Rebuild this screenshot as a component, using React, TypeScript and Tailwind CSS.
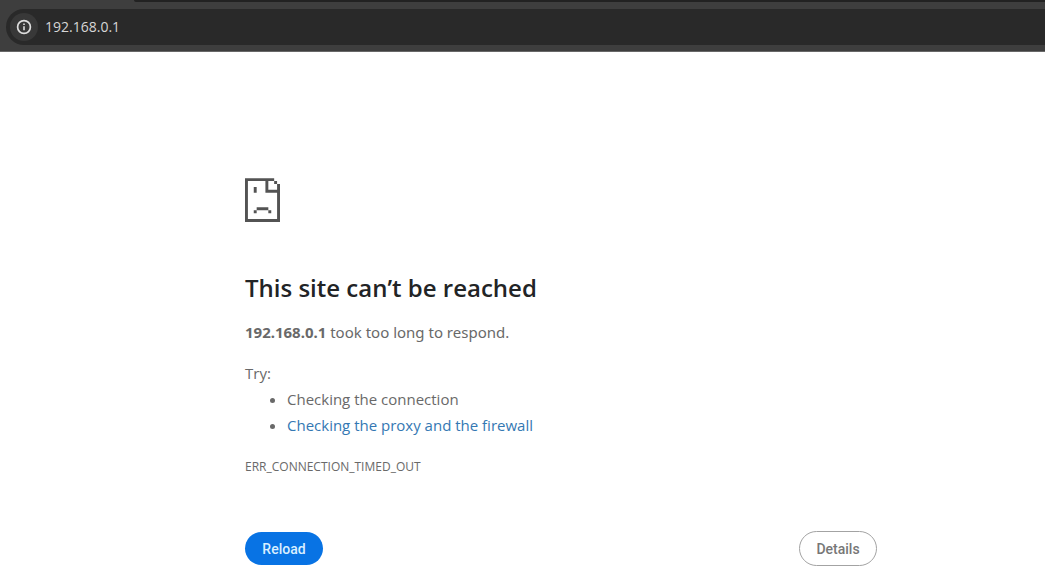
import type { ReactNode } from "react";

const suggestions = [
  { text: "Checking the connection" },
  { text: "Checking the proxy and the firewall", href: "#buttons" },
];

function InfoIcon() {
  return (
    <svg viewBox="0 0 16 16" className="size-4" fill="none" aria-hidden="true">
      <circle cx="8" cy="8" r="6.4" stroke="#dedede" strokeWidth="1.7" />
      <path d="M8 7.2v4.1M8 4.5v1.6" stroke="#dedede" strokeWidth="1.6" />
    </svg>
  );
}

function SadPageIcon() {
  return (
    <svg
      viewBox="0 0 12 15"
      className="h-[44px] w-[35px]"
      fill="#535353"
      aria-hidden="true"
    >
      {/* page outline with the folded corner */}
      <path
        d="M0 0h10v1h1v1h1v13H0zM1 1v13h10V5H7V1zM8 1v3h3V2h-1V1z"
        fillRule="evenodd"
      />
      {/* face */}
      <path d="M3 3h1v2H3zM4 10h4v1H4zM3 11h1v1H3zM8 11h1v1H8z" />
    </svg>
  );
}

function AddressBar({ url }: { url: string }) {
  return (
    <header className="bg-[#3e3e3e]">
      <div className="ml-[134px] h-[2px] rounded-bl bg-[#222222]" />
      <div className="border-b border-[#686868] pt-[7px] pb-[6px] pl-[6px]">
        <div className="flex h-9 items-center gap-[7px] rounded-l-full bg-[#292929] pl-1">
          <button
            type="button"
            aria-label="View site information"
            className="flex size-[28px] items-center justify-center rounded-full bg-[#383838]"
          >
            <InfoIcon />
          </button>
          <input
            type="text"
            aria-label="Address"
            defaultValue={url}
            className="min-w-0 flex-1 bg-transparent font-['Open_Sans','Noto_Sans',sans-serif] text-sm text-[#d6d6d6] outline-none"
          />
        </div>
      </div>
    </header>
  );
}

function PillButton({ children, primary }: { children: ReactNode; primary?: boolean }) {
  return (
    <button
      type="button"
      className={
        primary
          ? "h-[33px] w-[78px] rounded-full bg-[#0873e4] font-['Roboto',sans-serif] text-sm font-medium text-[#d9efff]"
          : "h-[35px] w-[78px] rounded-full border border-[#a3a3a3] font-['Roboto',sans-serif] text-sm font-medium text-[#777777]"
      }
    >
      {children}
    </button>
  );
}

export default function App() {
  return (
    <div className="min-h-screen bg-white font-['Open_Sans','Noto_Sans',sans-serif] text-[#696969]">
      <AddressBar url="192.168.0.1" />
      <main className="pt-[126px] pl-[77px]">
        <div className="mx-auto max-w-[632px]">
          <SadPageIcon />
          <h1 className="mt-[50px] text-2xl font-semibold text-[#222426]">
            This site can’t be reached
          </h1>
          <p className="mt-4 font-['Noto_Sans',sans-serif] text-[15px] leading-[25px]">
            <strong>192.168.0.1</strong> took too long to respond.
          </p>
          <p className="mt-4 text-[15px] leading-[25px]">Try:</p>
          <ul className="list-disc pl-[42px] text-[15px] leading-[26px]">
            {suggestions.map(({ text, href }) => (
              <li key={text}>
                {href ? (
                  <a href={href} className="text-[#3478b3]">
                    {text}
                  </a>
                ) : (
                  text
                )}
              </li>
            ))}
          </ul>
          <p className="mt-4 text-xs leading-[25px]">ERR_CONNECTION_TIMED_OUT</p>
          <div id="buttons" className="mt-[52px] flex items-center justify-between">
            <PillButton primary>Reload</PillButton>
            <PillButton>Details</PillButton>
          </div>
        </div>
      </main>
    </div>
  );
}
